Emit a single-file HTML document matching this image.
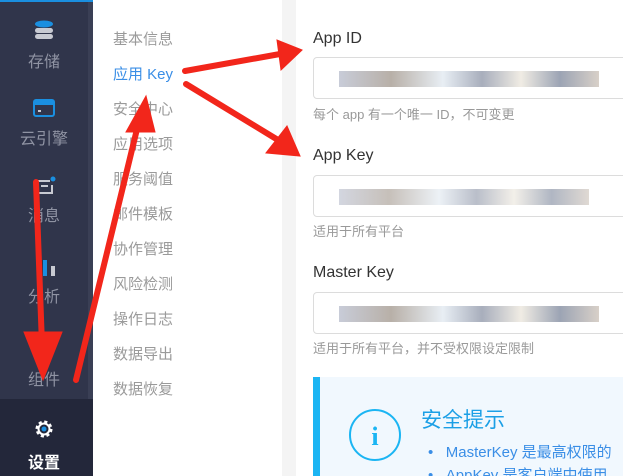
<!DOCTYPE html>
<html><head><meta charset="utf-8"><style>
*{margin:0;padding:0;box-sizing:border-box}
html,body{width:623px;height:476px;overflow:hidden}
body{position:relative;background:#fff;font-family:"Liberation Sans","Noto Sans CJK SC",sans-serif}
.side{position:absolute;left:0;top:0;width:93px;height:476px;background:#30354b}
.side .edge{position:absolute;right:0;top:0;width:5px;height:476px;background:#3a3f55}
.side .top{position:absolute;left:0;top:0;width:93px;height:2px;background:#1a8fe0}
.side .bot{position:absolute;left:0;top:399px;width:93px;height:77px;background:#23273a}
.lbl{position:absolute;left:0;width:88px;text-align:center;color:#8f93a3;font-size:16px}
.menu{position:absolute;left:113px;font-size:15px;color:#9a9a9a}
.gray{position:absolute;left:282px;top:0;width:14px;height:476px;background:#f4f4f4}
.lab{position:absolute;left:313px;font-size:16px;color:#333}
.inp{position:absolute;left:313px;width:330px;height:42px;border:1px solid #dcdcdc;border-radius:4px;background:#fff}
.hint{position:absolute;left:313px;font-size:13px;color:#999}
.blur{position:absolute;top:13px;height:16px;left:25px;width:260px;background:linear-gradient(90deg,#c8ccd8,#b8b0a8 20%,#e8eef4 40%,#a8aebc 55%,#f0ece4 70%,#9ca4b4 85%,#d8d0c8)}
.info{position:absolute;left:313px;top:377px;width:320px;height:99px;background:#f1f8fe;border-left:7px solid #1bb5f3;overflow:hidden}
</style></head><body>
<div class="side"><div class="edge"></div><div class="top"></div><div class="bot"></div>
<svg style="position:absolute;left:34px;top:20px" width="20" height="20"><ellipse cx="10" cy="4" rx="9" ry="3.5" fill="#1a8fe0"/><rect x="1" y="8" width="18" height="5" rx="2.5" fill="#c8cad2"/><rect x="1" y="14" width="18" height="5" rx="2.5" fill="#c8cad2"/></svg>
<div class="lbl" style="top:48px">存储</div>
<svg style="position:absolute;left:33px;top:99px" width="22" height="18"><rect x="1" y="1" width="20" height="16" rx="2" fill="none" stroke="#1a8fe0" stroke-width="2"/><rect x="1" y="1" width="20" height="5" fill="#1a8fe0"/><rect x="5" y="11" width="3" height="2" fill="#c8cad2"/></svg>
<div class="lbl" style="top:125px">云引擎</div>
<svg style="position:absolute;left:34px;top:176px" width="22" height="20"><path d="M2 5h14M2 5v12h16v-8M7 10h7" stroke="#c8cad2" stroke-width="2" fill="none"/><circle cx="19" cy="3" r="2.5" fill="#1a8fe0"/></svg>
<div class="lbl" style="top:202px">消息</div>
<svg style="position:absolute;left:34px;top:258px" width="22" height="20"><rect x="9" y="2" width="4" height="16" fill="#1a8fe0"/><rect x="17" y="8" width="4" height="10" fill="#c8cad2"/></svg>
<div class="lbl" style="top:283px">分析</div>
<div class="lbl" style="top:366px">组件</div>
<svg style="position:absolute;left:33px;top:418px" width="22" height="22" viewBox="0 0 22 22"><circle cx="11" cy="11" r="7" fill="none" stroke="#fff" stroke-width="3" stroke-dasharray="3 2.5"/><circle cx="11" cy="11" r="5.5" fill="none" stroke="#fff" stroke-width="2"/><circle cx="11" cy="11" r="2.5" fill="#1a8fe0"/></svg>
<div class="lbl" style="top:449px;color:#fff;font-weight:bold">设置</div>
</div>
<div class="menu" style="top:28px">基本信息</div>
<div class="menu" style="top:63px;color:#3a8ee6">应用 Key</div>
<div class="menu" style="top:98px">安全中心</div>
<div class="menu" style="top:133px">应用选项</div>
<div class="menu" style="top:168px">服务阈值</div>
<div class="menu" style="top:203px">邮件模板</div>
<div class="menu" style="top:238px">协作管理</div>
<div class="menu" style="top:273px">风险检测</div>
<div class="menu" style="top:308px">操作日志</div>
<div class="menu" style="top:343px">数据导出</div>
<div class="menu" style="top:378px">数据恢复</div>
<div class="gray"></div>
<div class="lab" style="top:30px">App ID</div>
<div class="inp" style="top:57px"><div class="blur"></div></div>
<div class="hint" style="top:104px">每个 app 有一个唯一 ID，不可变更</div>
<div class="lab" style="top:147px">App Key</div>
<div class="inp" style="top:175px"><div class="blur" style="width:250px;opacity:.8"></div></div>
<div class="hint" style="top:221px">适用于所有平台</div>
<div class="lab" style="top:264px">Master Key</div>
<div class="inp" style="top:292px"><div class="blur"></div></div>
<div class="hint" style="top:338px">适用于所有平台，并不受权限设定限制</div>
<div class="info">
<svg style="position:absolute;left:27px;top:30px" width="56" height="56"><circle cx="28" cy="28" r="25" fill="none" stroke="#1bb5f3" stroke-width="2"/><text x="28" y="38" text-anchor="middle" font-family="Liberation Serif,serif" font-weight="bold" font-size="26" fill="#1bb5f3">i</text></svg>
<div style="position:absolute;left:101px;top:27px;font-size:21px;color:#1b9fe6">安全提示</div>
<div style="position:absolute;left:108px;top:64px;font-size:15px;color:#3a8ee6;white-space:nowrap">•&nbsp;&nbsp;&nbsp;MasterKey 是最高权限的</div>
<div style="position:absolute;left:108px;top:87px;font-size:15px;color:#3a8ee6;white-space:nowrap">•&nbsp;&nbsp;&nbsp;AppKey 是客户端中使用</div>
</div>
<svg style="position:absolute;left:0;top:0" width="623" height="476">
<g fill="#f2261b" stroke="#f2261b" stroke-linecap="round">
<line x1="185" y1="71" x2="280" y2="54" stroke-width="6"/><polygon points="302,50 277,40 281,70"/>
<line x1="186" y1="84" x2="278" y2="140" stroke-width="6"/><polygon points="300,156 287,126 266,153"/>
<line x1="36" y1="182" x2="42" y2="345" stroke-width="6"/><polygon points="43,380 24,332 62,332"/>
<line x1="76" y1="380" x2="138" y2="125" stroke-width="6"/><polygon points="146,96 126,132 155,132"/>
</g></svg>
</body></html>
